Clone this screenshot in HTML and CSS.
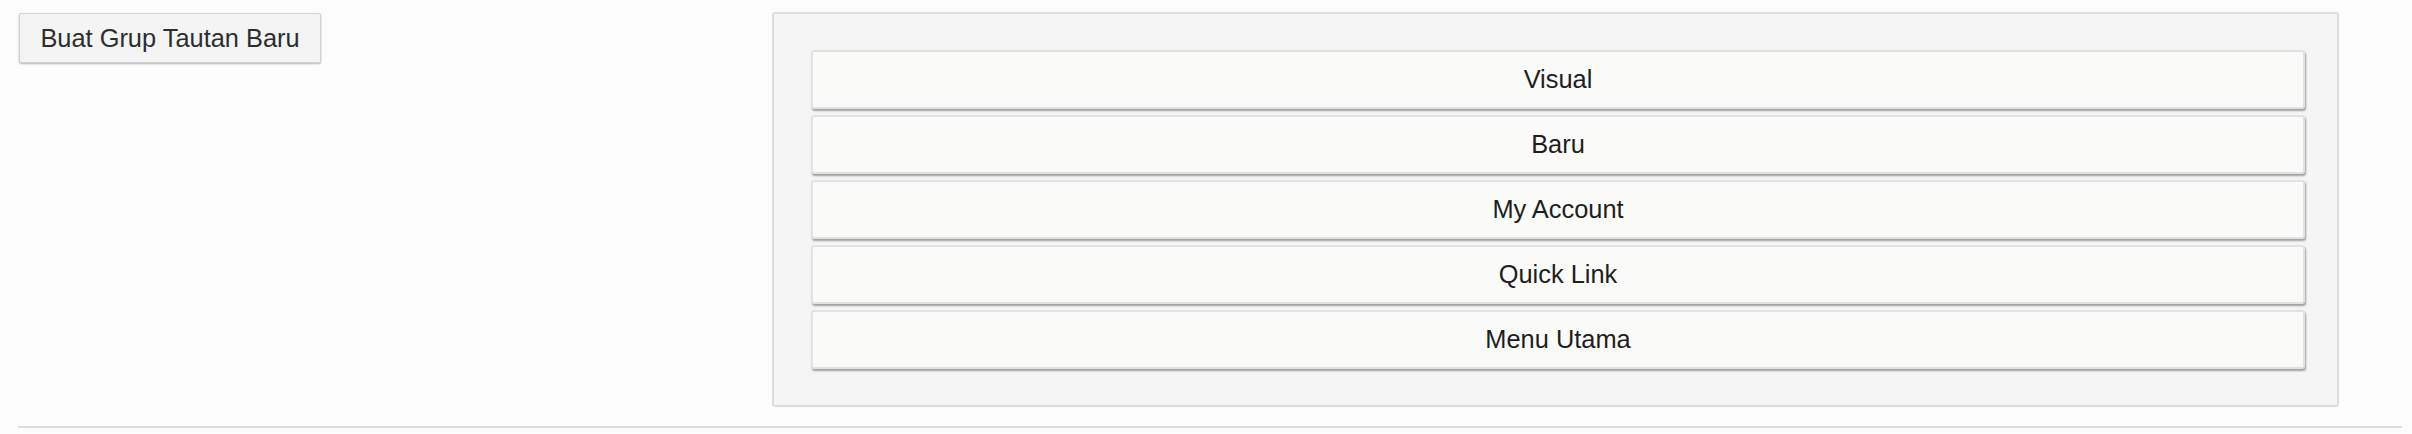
FILE: index.html
```html
<!DOCTYPE html>
<html lang="id">
<head>
<meta charset="utf-8">
<title>Grup Tautan</title>
<link rel="stylesheet" href="styles.css">
</head>
<body>
<div class="page">
  <div class="top">
    <div class="left">
      <button class="btn-new" type="button">Buat Grup Tautan Baru</button>
    </div>
    <div class="panel">
      <ul class="groups">
        <li class="group">Visual</li>
        <li class="group">Baru</li>
        <li class="group">My Account</li>
        <li class="group">Quick Link</li>
        <li class="group">Menu Utama</li>
      </ul>
    </div>
  </div>
  <hr class="divider">
</div>
</body>
</html>
```
FILE: styles.css
```css
html, body {
  margin: 0;
  padding: 0;
  background: #fcfcfc;
}
body {
  font-family: "Liberation Sans", Arial, sans-serif;
  font-size: 25.4px;
  color: #222;
}
.page {
  padding: 12px 10px 0 18px;
}
.top {
  display: grid;
  grid-template-columns: 754px 1567px;
  align-items: start;
}
.left {
  padding: 1px 0 0 1px;
}
.btn-new {
  font-family: inherit;
  font-size: 25.4px;
  color: #2e2e2e;
  background: #f4f4f4;
  border: 1px solid #d2d2d2;
  border-radius: 2px;
  box-shadow: 0 1px 2px rgba(0, 0, 0, 0.28);
  height: 50px;
  width: 302px;
  padding: 0 18px;
  margin: 0;
  text-align: center;
  line-height: 48px;
  white-space: nowrap;
}
.panel {
  box-sizing: border-box;
  height: 395px;
  background: #f5f5f5;
  border: 2px solid #dddddd;
  border-radius: 3px;
  padding: 36px 32px 36px 37px;
}
.groups {
  list-style: none;
  margin: 0;
  padding: 0;
  display: flex;
  flex-direction: column;
  gap: 6px;
}
.group {
  box-sizing: border-box;
  height: 59px;
  width: 1494px;
  background: #fafaf9;
  border: 2px solid #e2e2e2;
  border-radius: 3px;
  box-shadow: 1px 2px 2px rgba(0, 0, 0, 0.35);
  display: flex;
  align-items: center;
  justify-content: center;
  color: #1e1e1e;
}
.divider {
  margin: 19px 0 0 0;
  border: 0;
  height: 2px;
  background: #dddddd;
  width: 2384px;
}
```
